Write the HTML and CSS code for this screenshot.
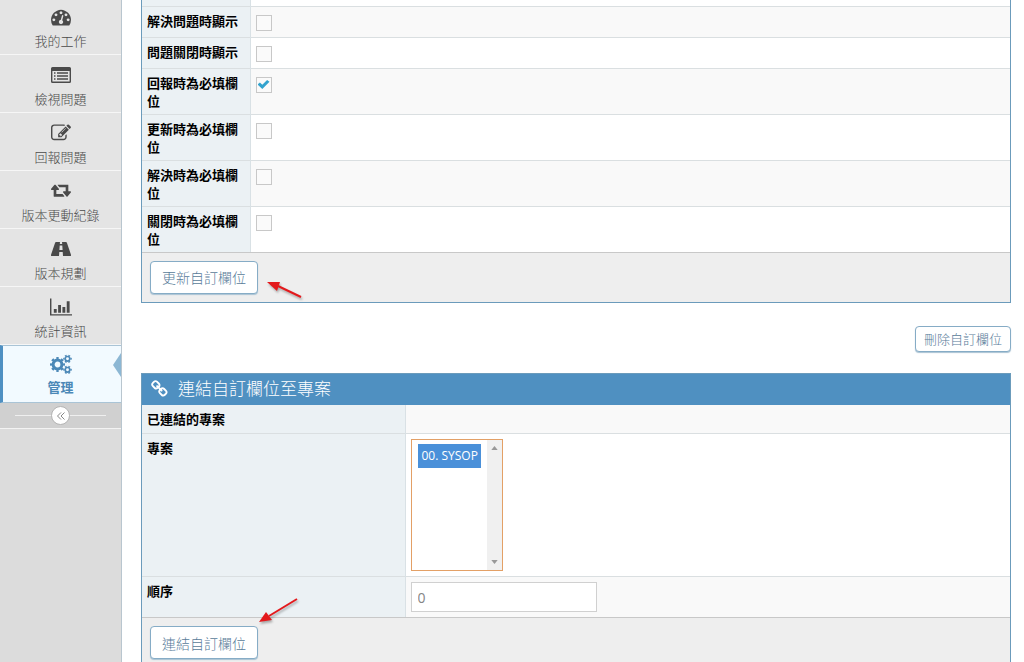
FILE: index.html
```html
<!DOCTYPE html>
<html lang="zh-Hant">
<head>
  <meta charset="UTF-8" />
  <meta name="viewport" content="width=device-width, initial-scale=1" />
  <title>管理自訂欄位</title>
  <link rel="stylesheet" href="styles.css">
</head>
<body>
  <div class="page">

    <aside class="sidebar">
      <nav class="nav">
        <a href="#" class="nav-item">
          <svg class="icon" viewBox="0 0 1792 1792"><path d="M384 1152q0-53-37.500-90.500t-90.500-37.500-90.500 37.500-37.500 90.500 37.500 90.500 90.500 37.500 90.500-37.500 37.500-90.500zm192-448q0-53-37.500-90.500t-90.500-37.500-90.500 37.500-37.500 90.500 37.500 90.500 90.500 37.500 90.500-37.500 37.500-90.500zm428 481l101-382q6-26-7.500-48.500t-38.500-29.500-48 6.500-30 39.500l-101 382q-60 5-107 43.500t-63 98.500q-20 77 20 146t117 89 146-20 89-117q16-60-6-117t-72-91zm660-33q0-53-37.500-90.500t-90.500-37.500-90.500 37.500-37.500 90.500 37.500 90.500 90.500 37.500 90.500-37.500 37.500-90.500zm-640-640q0-53-37.500-90.500t-90.500-37.500-90.500 37.500-37.500 90.500 37.500 90.500 90.500 37.500 90.500-37.500 37.500-90.500zm448 192q0-53-37.500-90.500t-90.500-37.500-90.500 37.500-37.500 90.500 37.500 90.500 90.500 37.500 90.500-37.500 37.500-90.500zm320 448q0 261-141 483-19 29-54 29h-1402q-35 0-54-29-141-221-141-483 0-182 71-348t191-286 286-191 348-71 348 71 286 191 191 286 71 348z"/></svg>
          <span>我的工作</span>
        </a>
        <a href="#" class="nav-item">
          <svg class="icon" viewBox="0 0 20 20"><path fill-rule="evenodd" d="M1.500 2h17A1.500 1.500 0 0 1 20 3.500v13a1.500 1.500 0 0 1-1.500 1.500h-17A1.500 1.500 0 0 1 0 16.500v-13A1.500 1.500 0 0 1 1.500 2zM1.400 6v10.600h17.200V6zM3 7.300h1.500v1.400H3zM6 7.300h11v1.400H6zM3 10.300h1.500v1.400H3zM6 10.300h11v1.400H6zM3 13.300h1.500v1.400H3zM6 13.300h11v1.400H6z"/></svg>
          <span>檢視問題</span>
        </a>
        <a href="#" class="nav-item">
          <svg class="icon" viewBox="0 0 1792 1792"><path d="M888 1184l116-116-152-152-116 116v56h96v96h56zm440-720q-16-16-33 1l-350 350q-17 17-1 33t33-1l350-350q17-17 1-33zm80 594v190q0 119-84.500 203.500t-203.500 84.500h-832q-119 0-203.500-84.500t-84.500-203.500v-832q0-119 84.500-203.500t203.500-84.500h832q63 0 117 25 15 7 18 23 3 17-9 29l-49 49q-14 14-32 8-23-6-45-6h-832q-66 0-113 47t-47 113v832q0 66 47 113t113 47h832q66 0 113-47t47-113v-126q0-13 9-22l64-64q15-15 35-7t20 29zm-96-738l288 288-672 672h-288v-288zm444 132l-92 92-288-288 92-92q28-28 68-28t68 28l152 152q28 28 28 68t-28 68z"/></svg>
          <span>回報問題</span>
        </a>
        <a href="#" class="nav-item">
          <svg class="icon" viewBox="0 100 1920 1792"><path d="M1280 1504q0 13-9.500 22.500t-22.500 9.500h-960q-8 0-13.500-2t-9-7-5.500-8-3-11.500-1-11.500v-600h-192q-26 0-45-19t-19-45q0-24 15-41l320-384q19-22 49-22t49 22l320 384q15 17 15 41 0 26-19 45t-45 19h-192v384h576q16 0 25 11l160 192q7 10 7 21zm640-416q0 24-15 41l-320 384q-20 23-49 23t-49-23l-320-384q-15-17-15-41 0-26 19-45t45-19h192v-384h-576q-16 0-25-12l-160-192q-7-9-7-20 0-13 9.500-22.500t22.500-9.500h960q8 0 13.500 2t9 7 5.500 8 3 11.500 1 11.500v600h192q26 0 45 19t19 45z"/></svg>
          <span>版本更動紀錄</span>
        </a>
        <a href="#" class="nav-item">
          <svg class="icon" viewBox="0 0 20 20"><path fill-rule="evenodd" d="M5 3h4l-.2 2h2.400L11 3h4q.6 0 .9.700l4 11.800q.4 1.500-.6 1.500H12l-.3-4H8.300L8 17H.7q-1 0-.6-1.500l4-11.800Q4.400 3 5 3zM8.700 6.500L8.400 11h3.200l-.3-4.500z"/></svg>
          <span>版本規劃</span>
        </a>
        <a href="#" class="nav-item">
          <svg class="icon icon-wide" viewBox="0 0 23 20"><path d="M0 1h1.500v16.500H23V19H0zM4 12h3v4H4zM8.500 8h3v8h-3zM13 10h3v6h-3zM17.500 4h3v12h-3z"/></svg>
          <span>統計資訊</span>
        </a>
        <a href="#" class="nav-item active">
          <svg class="icon icon-wide" viewBox="0 0 22 20" fill="none">
            <g stroke="currentColor" fill="none">
              <circle cx="7.500" cy="10.500" r="4.400" stroke-width="3"/>
              <circle cx="7.500" cy="10.500" r="6.400" stroke-width="2.200" pathLength="16" stroke-dasharray="1 1" stroke-dashoffset="0.500"/>
              <circle cx="17.500" cy="4.800" r="2.300" stroke-width="1.700"/>
              <circle cx="17.500" cy="4.800" r="3.600" stroke-width="1.400" pathLength="12" stroke-dasharray="1 1" stroke-dashoffset="0.500"/>
              <circle cx="17.500" cy="15.800" r="2.300" stroke-width="1.700"/>
              <circle cx="17.500" cy="15.800" r="3.600" stroke-width="1.400" pathLength="12" stroke-dasharray="1 1" stroke-dashoffset="0.500"/>
            </g>
          </svg>
          <span>管理</span>
        </a>
      </nav>
      <div class="sidebar-toggle">
        <button type="button" class="toggle-btn" aria-label="收合">
          <svg viewBox="0 0 10 10"><path d="M5 1.500L1.500 5 5 8.500M8.500 1.500L5 5l3.500 3.500" fill="none" stroke="currentColor"/></svg>
        </button>
      </div>
    </aside>

    <main class="content">
      <form class="panel">
        <table class="fields">
          <tr class="cut"><th></th><td></td></tr>
          <tr><th><label for="show-resolved">解決問題時顯示</label></th><td><input type="checkbox" id="show-resolved"></td></tr>
          <tr><th><label for="show-closed">問題關閉時顯示</label></th><td><input type="checkbox" id="show-closed"></td></tr>
          <tr><th><label for="require-report">回報時為必填欄位</label></th><td><input type="checkbox" id="require-report" checked></td></tr>
          <tr><th><label for="require-update">更新時為必填欄位</label></th><td><input type="checkbox" id="require-update"></td></tr>
          <tr><th><label for="require-resolved">解決時為必填欄位</label></th><td><input type="checkbox" id="require-resolved"></td></tr>
          <tr><th><label for="require-closed">關閉時為必填欄位</label></th><td><input type="checkbox" id="require-closed"></td></tr>
        </table>
        <div class="panel-footer">
          <button type="button" class="btn">更新自訂欄位</button>
          <svg class="arrow arrow-update" viewBox="0 0 40 24"><path d="M12 6L35 17" stroke="#e3191c" stroke-width="2"/><path d="M1 2L14 2L11 11z" fill="#e3191c"/></svg>
        </div>
      </form>

      <div class="actions">
        <button type="button" class="btn btn-sm">刪除自訂欄位</button>
      </div>

      <form class="panel">
        <h4 class="panel-title">
          <svg viewBox="0 0 1792 1792"><path d="M1456 1216q0-40-28-68l-208-208q-28-28-68-28-42 0-72 32 3 3 19 18.500t21.500 21.500 15 19 13 25.500 3.500 27.500q0 40-28 68t-68 28q-15 0-27.500-3.500t-25.500-13-19-15-21.500-21.500-18.500-19q-33 31-33 73 0 40 28 68l206 207q27 27 68 27 40 0 68-26l147-146q28-28 28-67zm-703-705q0-40-28-68l-206-207q-28-28-68-28-39 0-68 27l-147 146q-28 28-28 67 0 40 28 68l208 208q27 27 68 27 42 0 72-31-3-3-19-18.500t-21.500-21.500-15-19-13-25.500-3.500-27.500q0-40 28-68t68-28q15 0 27.500 3.500t25.500 13 19 15 21.500 21.500 18.500 19q33-31 33-73zm895 705q0 120-85 203l-147 146q-83 83-203 83-121 0-204-85l-206-207q-83-83-83-203 0-123 88-209l-88-88q-86 88-208 88-120 0-204-84l-208-208q-84-84-84-204t85-203l147-146q83-83 203-83 121 0 204 85l206 207q83 83 83 203 0 123-88 209l88 88q86-88 208-88 120 0 204 84l208 208q84 84 84 204z"/></svg>
          連結自訂欄位至專案
        </h4>
        <table class="fields link-fields">
          <tr><th>已連結的專案</th><td></td></tr>
          <tr>
            <th><label for="project">專案</label></th>
            <td>
              <div class="listbox">
                <select id="project" multiple size="5">
                  <option selected>00. SYSOP</option>
                </select>
                <div class="scrollbar">
                  <svg viewBox="0 0 8 5"><path d="M0 5L4 0l4 5z"/></svg>
                  <svg viewBox="0 0 8 5"><path d="M0 0l4 5 4-5z"/></svg>
                </div>
              </div>
            </td>
          </tr>
          <tr><th><label for="sequence">順序</label></th><td><input type="text" id="sequence" class="text-input" value="0"></td></tr>
        </table>
        <div class="panel-footer">
          <button type="button" class="btn">連結自訂欄位</button>
          <svg class="arrow arrow-link" viewBox="0 0 42 26"><path d="M11 19L39 2" stroke="#e3191c" stroke-width="2"/><path d="M1 25L8 15L14 23z" fill="#e3191c"/></svg>
        </div>
      </form>
    </main>

  </div>
</body>
</html>
```

FILE: styles.css
```css
* {
  box-sizing: border-box;
}

body {
  margin: 0;
  font-family: "Open Sans", "Noto Sans CJK TC", sans-serif;
  font-size: 13px;
  line-height: 18px;
  color: #393939;
  background-color: #fff;
}

.page {
  display: flex;
  height: 100vh;
  overflow: hidden;
}

/* sidebar */
.sidebar {
  flex: 0 0 122px;
  background-color: #dcdcdc;
  border-right: 1px solid #b9c6cf;
}

.nav {
  margin-top: -3px;
}

.nav-item {
  position: relative;
  display: flex;
  flex-direction: column;
  align-items: center;
  gap: 5px;
  height: 58px;
  padding-top: 10px;
  border-bottom: 1px solid #f6f6f6;
  background-color: #e4e4e4;
  color: #4a4a4a;
  font-weight: 300;
  text-decoration: none;
}

.icon {
  width: 20px;
  height: 20px;
  fill: currentColor;
}

.icon-wide {
  width: 22px;
}

.nav-item.active {
  gap: 4px;
  border-top: 1px solid #a9c4d6;
  border-bottom-color: #a9c4d6;
  border-left: 3px solid #4f90c2;
  padding-right: 3px;
  padding-top: 8px;
  background-color: #f2faff;
  color: #4b88b7;
  font-weight: 700;
}

.nav-item.active .icon {
  fill: none;
}

.nav-item.active::after {
  content: "";
  position: absolute;
  right: 0;
  top: 7px;
  border: 12px solid transparent;
  border-left-width: 0;
  border-right: 8px solid #8cb7d4;
}

.sidebar-toggle {
  display: flex;
  align-items: center;
  height: 26px;
  padding: 0 15px;
  background-color: #d0d0d0;
  border-bottom: 1px solid #f3f3f3;
}

.sidebar-toggle::before,
.sidebar-toggle::after {
  content: "";
  flex: 1;
  border-top: 1px solid #efefef;
}

.toggle-btn {
  display: flex;
  align-items: center;
  justify-content: center;
  width: 19px;
  height: 19px;
  padding: 0;
  border: 1px solid #b4b4b4;
  border-radius: 50%;
  background-color: #fff;
  color: #888;
}

.toggle-btn svg {
  width: 10px;
  height: 10px;
}

/* main */
.content {
  flex: 1;
  padding: 0 13px 0 19px;
}

.panel {
  border: 1px solid #6b9bbb;
}

.content > .panel:first-child {
  border-top: none;
}

.fields {
  width: 100%;
  border-collapse: collapse;
  table-layout: fixed;
}

.fields tr {
  height: 31px;
  border-bottom: 1px solid #dadfe1;
  background-color: #fff;
}

.fields tr:nth-child(even) {
  background-color: #f9f9f9;
}

.fields tr:last-child {
  border-bottom: none;
}

.fields .cut {
  height: 6px;
}

.fields .cut th,
.fields .cut td {
  padding: 0;
}

.fields th {
  width: 108px;
  padding: 5px 5px 4px;
  border-right: 1px solid #d9e1e5;
  background-color: #ebf1f4;
  color: #000;
  font-weight: 700;
  text-align: left;
  vertical-align: top;
}

.fields td {
  padding: 5px;
  vertical-align: top;
}

input[type="checkbox"] {
  appearance: none;
  display: flex;
  align-items: center;
  justify-content: center;
  width: 16px;
  height: 16px;
  margin: 3px 0 0;
  border: 1px solid #c8c8c8;
  background-color: #fafafa;
}

input[type="checkbox"]:checked::before {
  content: "";
  width: 12px;
  height: 10px;
  background-color: #32a3ce;
  clip-path: polygon(0 50%, 20% 30%, 40% 52%, 80% 4%, 100% 22%, 40% 95%);
}

.panel-footer {
  position: relative;
  padding: 8px;
  border-top: 1px solid #c8c8c8;
  background-color: #eee;
}

.btn {
  display: block;
  height: 33px;
  padding: 0 11px;
  border: 1px solid #86acc6;
  border-radius: 4px;
  background-color: #fff;
  color: #587b99;
  font-family: inherit;
  font-size: 14px;
  font-weight: 300;
  box-shadow: 0 1px 1px #a9c2d3;
}

.btn-sm {
  height: 26px;
  padding: 0 8px;
  font-size: 13px;
}

.actions {
  display: flex;
  justify-content: flex-end;
  padding: 23px 0 21px;
}

.panel-title {
  display: flex;
  align-items: center;
  gap: 9px;
  height: 31px;
  margin: 0;
  padding: 0 9px;
  background-color: #4f90c1;
  color: #fff;
  font-size: 17px;
  font-weight: 300;
}

.panel-title svg {
  width: 18px;
  height: 18px;
  fill: currentColor;
}

.link-fields tr {
  height: 29px;
}

.link-fields tr:nth-child(odd) {
  background-color: #f9f9f9;
}

.link-fields tr:nth-child(even) {
  background-color: #fff;
}

.link-fields th {
  width: 263px;
}

.listbox {
  display: flex;
  width: 92px;
  height: 132px;
  border: 1px solid #e3a066;
  background-color: #fff;
}

.listbox select {
  flex: 1;
  min-width: 0;
  height: 130px;
  padding: 4px 6px;
  border: none;
  outline: none;
  background: none;
  font-family: inherit;
  font-size: 12px;
  overflow: hidden;
}

.listbox option {
  min-height: 24px;
  padding: 3px 4px;
  line-height: 18px;
  background: linear-gradient(#4a90d9, #4a90d9);
  color: #fff;
}

.listbox option:checked {
  color: #fff;
}

.scrollbar {
  display: flex;
  flex-direction: column;
  justify-content: space-between;
  align-items: center;
  width: 15px;
  padding: 6px 0;
  background-color: #f0f0f0;
}

.scrollbar svg {
  width: 7px;
  height: 4px;
  fill: #999;
}

.text-input {
  display: block;
  width: 186px;
  height: 30px;
  padding: 0 6px;
  border: 1px solid #d0d0d0;
  color: #858585;
  font-family: inherit;
  font-size: 14px;
}

/* red pointers beside the buttons */
.arrow {
  position: absolute;
  fill: none;
  filter: drop-shadow(1px 2px 1px rgba(0, 0, 0, 0.3));
}

.arrow-update {
  left: 124px;
  top: 27px;
  width: 40px;
  height: 24px;
}

.arrow-link {
  left: 116px;
  top: -21px;
  width: 42px;
  height: 26px;
}
```
